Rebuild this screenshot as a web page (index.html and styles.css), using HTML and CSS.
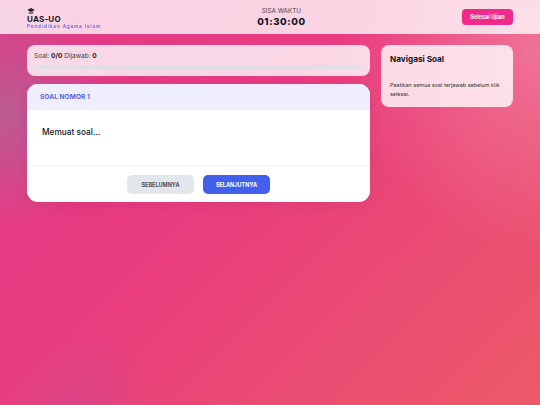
FILE: index.html
```html
<!DOCTYPE html>
<html lang="id">
<head>
<meta charset="utf-8">
<title>UAS-UO</title>
<link rel="stylesheet" href="styles.css">
</head>
<body>
<header class="topbar">
  <div class="brand">
    <svg class="cap" viewBox="0 0 16 16" width="8" height="8"><path d="M8 2 0.5 6 8 10l7.500-4z" fill="#222"/><path d="M3.500 9v3.200C5 14.500 11 14.500 12.500 12.200V9L8 11.400z" fill="#5a4a3a"/></svg>
    <div class="brand-name">UAS-UO</div>
    <div class="brand-sub">Pendidikan Agama Islam</div>
  </div>
  <div class="timer">
    <div class="timer-label">SISA WAKTU</div>
    <div class="timer-value">01:30:00</div>
  </div>
  <button class="finish">Selesai Ujian</button>
</header>
<main class="layout">
  <section class="main-col">
    <div class="progress-card">
      <div class="progress-text">Soal: <b>0/0</b> Dijawab: <b>0</b></div>
      <div class="progress-track"></div>
    </div>
    <div class="question-card">
      <div class="question-head">SOAL NOMOR 1</div>
      <div class="question-body">Memuat soal...</div>
      <div class="question-foot">
        <button class="btn btn-prev">SEBELUMNYA</button>
        <button class="btn btn-next">SELANJUTNYA</button>
      </div>
    </div>
  </section>
  <aside class="nav-card">
    <h2 class="nav-title">Navigasi Soal</h2>
    <p class="nav-note">Pastikan semua soal terjawab sebelum klik selesai.</p>
  </aside>
</main>
</body>
</html>
```
FILE: styles.css
```css
* { box-sizing: border-box; }
html, body { height: 100%; }
body {
  margin: 0;
  min-height: 405px;
  font-family: "Inter", "Liberation Sans", sans-serif;
  color: #15151f;
  background:
    radial-gradient(circle at 0% 28%, rgba(175, 100, 150, 0.8) 0, rgba(175, 100, 150, 0) 115px),
    radial-gradient(circle at 14% 100%, rgba(190, 75, 150, 0.35) 0, rgba(190, 75, 150, 0) 80px),
    radial-gradient(circle at 100% 12%, rgba(245, 150, 175, 0.55) 0, rgba(245, 150, 175, 0) 200px),
    linear-gradient(135deg, #e03a88 0, #e93b80 40%, #ec5a68 100%);
  overflow: hidden;
}
.topbar {
  height: 34px;
  padding: 0 27px;
  display: flex;
  justify-content: space-between;
  align-items: center;
  background: rgba(255, 255, 255, 0.78);
}
.brand { display: flex; flex-direction: column; align-items: flex-start; padding-top: 2px; }
.cap { display: block; }
.brand-name { font-size: 8px; font-weight: 700; line-height: 9px; letter-spacing: 0.2px; }
.brand-sub { font-size: 4.400px; font-weight: 600; line-height: 6px; letter-spacing: 1px; color: #5a64e0; }
.timer { text-align: center; }
.timer-label { font-size: 6.500px; line-height: 9px; color: #4a4a55; letter-spacing: -0.1px; }
.timer-value { font-size: 9.600px; font-weight: 800; line-height: 12px; letter-spacing: 0.6px; }
.finish {
  width: 51px;
  height: 16px;
  padding: 0;
  border: 0;
  border-radius: 4px;
  background: #f02a8b;
  color: #fff;
  font: 700 5.500px "Inter", "Liberation Sans", sans-serif;
}
.layout {
  display: flex;
  gap: 11px;
  padding: 11px 27px 0;
  align-items: flex-start;
}
.main-col { width: 343px; display: flex; flex-direction: column; gap: 8px; }
.progress-card {
  height: 31px;
  padding: 7px 7px 0;
  border-radius: 8px;
  background: rgba(255, 255, 255, 0.8);
}
.progress-text { font-size: 6.500px; line-height: 9px; color: #444; }
.progress-text b { color: #15151f; font-weight: 700; }
.progress-track { height: 4px; margin-top: 4px; border-radius: 2px; background: #e2dfe5; }
.question-card {
  height: 118px;
  border-radius: 11px;
  background: #fff;
  overflow: hidden;
  display: flex;
  flex-direction: column;
  box-shadow: 0 4px 14px rgba(0, 0, 0, 0.06);
}
.question-head {
  height: 26px;
  padding-left: 13px;
  display: flex;
  align-items: center;
  background: #eeeefe;
  color: #4f63e0;
  font-size: 6.500px;
  font-weight: 700;
  letter-spacing: 0.1px;
}
.question-body {
  flex: 1;
  padding: 16px 15px 0;
  font-size: 8.300px;
  line-height: 12px;
  font-weight: 500;
  border-bottom: 1px solid #f4f4f6;
}
.question-foot {
  height: 36px;
  display: flex;
  justify-content: center;
  gap: 9px;
  padding-top: 9px;
}
.btn {
  width: 67px;
  height: 19px;
  padding: 0;
  border: 0;
  border-radius: 5px;
  font: 700 5.500px "Inter", "Liberation Sans", sans-serif;
}
.btn-prev { background: #e2e6ed; color: #4a5160; }
.btn-next { background: #4360ea; color: #fff; }
.nav-card {
  width: 132px;
  height: 62px;
  padding: 9px;
  border-radius: 8px;
  background: rgba(255, 255, 255, 0.8);
}
.nav-title { margin: 0; font-size: 8.200px; line-height: 11px; font-weight: 700; }
.nav-note { margin: 16px 0 0; font-size: 5.450px; line-height: 9px; color: #333; }
```
